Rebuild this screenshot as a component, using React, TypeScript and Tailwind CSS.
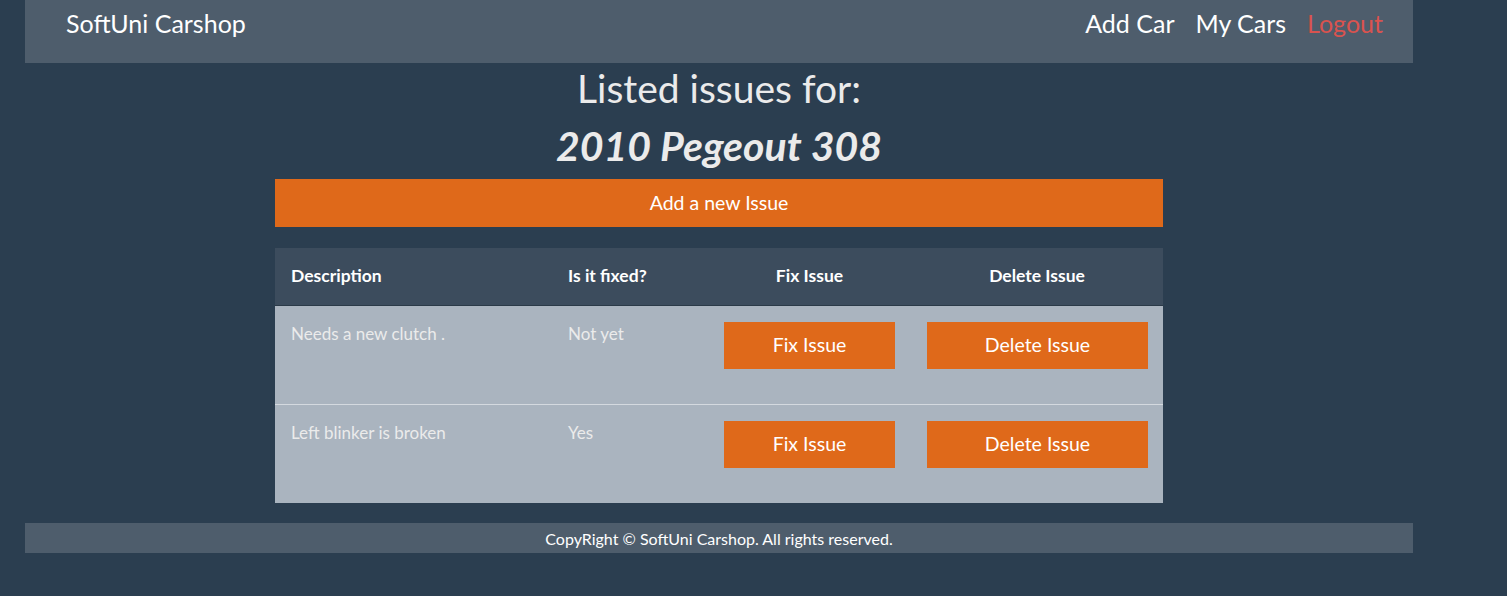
import React from 'react';

const issues = [
  { description: 'Needs a new clutch .', fixed: 'Not yet' },
  { description: 'Left blinker is broken', fixed: 'Yes' },
];

export default function App() {
  return (
    <div className="min-h-[596px] bg-[#2b3e50] font-['Lato',sans-serif] text-white">
      <div className="ml-[25px] w-[1388px]">
        {/* Navbar */}
        <header className="flex h-[63px] items-start justify-between bg-[#4e5d6c] px-[41px] pt-[7px]">
          <span className="text-[25px] leading-[32px]">SoftUni Carshop</span>
          <nav className="mr-[-11px] flex gap-[21px] text-[25px] leading-[32px]">
            <a href="#">Add Car</a>
            <a href="#">My Cars</a>
            <a href="#" className="text-[#d9534f]">Logout</a>
          </nav>
        </header>

        {/* Main */}
        <main className="flex flex-col items-center">
          <h1 className="mt-[1px] text-[39px] leading-[48px] text-[#ebebeb]">Listed issues for:</h1>
          <h2 className="mt-[10px] text-[41px] font-bold italic leading-[48px] text-[#ebebeb]">2010 Pegeout 308</h2>
          <button className="mt-[9px] h-[48px] w-[888px] bg-[#df691a] text-[19.5px] text-white">Add a new Issue</button>

          <table className="mt-[21px] w-[888px] table-fixed border-collapse">
            <colgroup>
              <col className="w-[277px]" />
              <col className="w-[156px]" />
              <col className="w-[203px]" />
              <col className="w-[252px]" />
            </colgroup>
            <thead className="bg-[#3c4c5d] text-[17.5px]">
              <tr className="h-[57px] border-b border-[#2b3a48]">
                <th className="px-[16px] text-left font-bold">Description</th>
                <th className="px-[16px] text-left font-bold">Is it fixed?</th>
                <th className="px-[16px] text-center font-bold">Fix Issue</th>
                <th className="px-[16px] text-center font-bold">Delete Issue</th>
              </tr>
            </thead>
            <tbody className="bg-[#aab4bf] text-[17px] text-[#ebebeb]">
              {issues.map((issue, i) => (
                <tr key={i} className={`h-[99px] ${i > 0 ? 'border-t border-[#d4d9df]' : ''}`}>
                  <td className="px-[16px] pt-[16px] align-top leading-[24px]">{issue.description}</td>
                  <td className="px-[16px] pt-[16px] align-top leading-[24px]">{issue.fixed}</td>
                  <td className="px-[16px] pt-[16px] align-top">
                    <button className="h-[47px] w-full bg-[#df691a] text-[19.5px] text-white">Fix Issue</button>
                  </td>
                  <td className="py-[16px] pl-[16px] pr-[15px] align-top">
                    <button className="h-[47px] w-full bg-[#df691a] text-[19.5px] text-white">Delete Issue</button>
                  </td>
                </tr>
              ))}
            </tbody>
          </table>
        </main>

        {/* Footer */}
        <footer className="mt-[20px] flex h-[30px] items-center justify-center bg-[#4e5d6c] pt-[2px] text-[16px]">
          CopyRight © SoftUni Carshop. All rights reserved.
        </footer>
      </div>
    </div>
  );
}
